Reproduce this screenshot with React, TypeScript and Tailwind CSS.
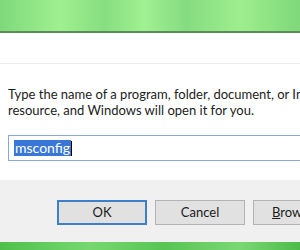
import React from "react";

const font = { fontFamily: 'Lato, "Noto Sans", sans-serif' };

const Button: React.FC<{ label: React.ReactNode; primary?: boolean }> = ({ label, primary }) => (
  <div
    className={`flex h-[25px] w-[90px] shrink-0 items-center justify-center bg-[#e1e1e1] text-[13px] text-[#1a1a1a] ${
      primary ? "border-2 border-[#3f7fc9]" : "border border-[#b2b2b2]"
    }`}
  >
    {label}
  </div>
);

export default function App() {
  return (
    <div className="flex h-[250px] w-[300px] flex-col overflow-hidden bg-white" style={font}>
      <div className="h-[31px] shrink-0 bg-[linear-gradient(90deg,#7fd97b_0%,#9ff08f_20%,#86de80_35%,#a0f191_48%,#85dc80_62%,#9eee8e_80%,#7fd879_100%)]" />
      <div className="h-[2px] shrink-0 bg-[#5c8a5a]" />
      <div className="h-[30px] shrink-0 bg-white" />
      <div className="h-px shrink-0 bg-[#ececec]" />
      <div className="flex flex-1 flex-col bg-white pl-[8px] pt-[22px]">
        <p className="whitespace-nowrap text-[13px] leading-[16px] text-[#1c1c1c]">
          Type the name of a program, folder, document, or Internet
          <br />
          resource, and Windows will open it for you.
        </p>
        <div className="mt-[17px] flex h-[26px] w-[320px] items-center border border-[#8aa9cf] pl-[5px]">
          <span className="bg-[#3a76d6] px-px text-[14px] leading-[16px] text-white">msconfig</span>
          <span className="h-[15px] w-px bg-black" />
        </div>
      </div>
      <div className="flex h-[62px] shrink-0 items-start gap-[8px] bg-[#f0f0f0] pl-[57px] pt-[20px]">
        <Button label="OK" primary />
        <Button label="Cancel" />
        <Button
          label={
            <span>
              <span className="underline">B</span>rowse...
            </span>
          }
        />
      </div>
      <div className="h-[8px] shrink-0 bg-[linear-gradient(90deg,#4fbf4c_0%,#76d86f_30%,#58c454_55%,#7ad873_80%,#4dbb49_100%)]" />
    </div>
  );
}
